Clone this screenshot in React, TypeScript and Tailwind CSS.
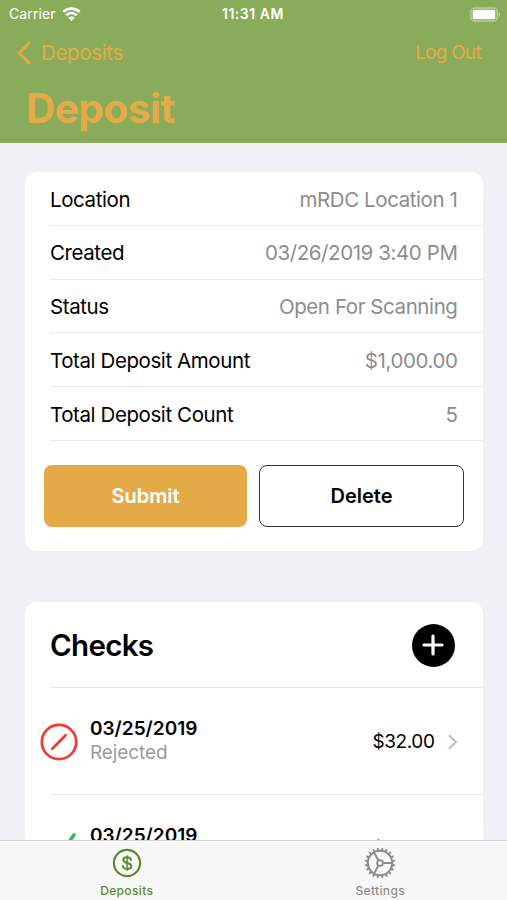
const details = [
  { label: 'Location', value: 'mRDC Location 1' },
  { label: 'Created', value: '03/26/2019 3:40 PM' },
  { label: 'Status', value: 'Open For Scanning' },
  { label: 'Total Deposit Amount', value: '$1,000.00' },
  { label: 'Total Deposit Count', value: '5' },
]

const checks = [
  { date: '03/25/2019', status: 'Rejected', amount: '$32.00' },
  { date: '03/25/2019', status: 'Accepted', amount: '$32.00' },
]

function WifiIcon() {
  return (
    <svg width="19" height="14" viewBox="0 0 18 14" fill="none" stroke="white" strokeWidth="2.7">
      <path d="M0.9 4.9a11.5 11.5 0 0 1 16.2 0" />
      <path d="M3.8 8.2a7.3 7.3 0 0 1 10.4 0" />
      <path d="M9 14 5.9 10.9a4.4 4.4 0 0 1 6.2 0Z" fill="white" stroke="none" />
    </svg>
  )
}

function BatteryIcon() {
  return (
    <svg width="31" height="15" viewBox="0 0 31 15" fill="none">
      <rect x="0.9" y="0.9" width="26.4" height="13.2" rx="3.8" stroke="white" strokeOpacity="0.4" strokeWidth="1.5" />
      <rect x="2.7" y="2.7" width="22.6" height="9.6" rx="2" fill="white" />
      <path d="M28.7 5.3c1.7 0.7 1.7 3.7 0 4.4Z" fill="white" fillOpacity="0.5" />
    </svg>
  )
}

function RejectedIcon() {
  return (
    <svg width="38" height="38" viewBox="0 0 38 38" fill="none" stroke="#f33b30" strokeWidth="2.7">
      <circle cx="19" cy="19" r="17.2" />
      <path d="M12.2 25.8 25.6 12.2" strokeLinecap="round" />
    </svg>
  )
}

function AcceptedIcon() {
  return (
    <svg width="38" height="38" viewBox="0 0 38 38" fill="none" stroke="#22bf55" strokeWidth="3.4">
      <path d="M6 22 14.5 33 34 4.8" strokeLinecap="round" strokeLinejoin="round" />
    </svg>
  )
}

function DollarIcon() {
  return (
    <svg width="30" height="30" viewBox="0 0 30 30" fill="none" stroke="#5b8c27" strokeLinecap="round">
      <circle cx="15" cy="15" r="13.1" strokeWidth="2.2" />
      <path
        d="M18.9 12c-.2-1.7-1.7-2.7-3.8-2.7-2.3 0-3.8 1.1-3.8 2.7 0 3.9 8 1.9 8 6 0 1.8-1.6 2.9-4.1 2.9s-4.1-1.1-4.3-2.9"
        strokeWidth="2"
      />
      <path d="M15.1 8v14.2" strokeWidth="1.5" />
    </svg>
  )
}

function GearIcon() {
  const teeth = Array.from({ length: 20 }, (_, i) => i * 18 + 9)
  return (
    <svg width="32" height="32" viewBox="-16 -16 32 32" fill="none" stroke="#8d8d8d">
      {teeth.map((angle) => (
        <path key={angle} d="M12-1.4 15.4-.7V.7L12 1.4Z" fill="#8d8d8d" stroke="none" transform={`rotate(${angle})`} />
      ))}
      <circle r="12.2" strokeWidth="2.1" />
      <circle r="2.9" strokeWidth="1.9" />
      <path d="M3 0H12M-1.5-2.6-6-10.4M-1.5 2.6-6 10.4" strokeWidth="2" />
    </svg>
  )
}

export default function App() {
  return (
    <div className="flex h-[900px] w-[507px] flex-col overflow-hidden bg-[#f1f0f6] font-['Inter',sans-serif] text-black">
      <header className="h-[143px] shrink-0 bg-[#89ac5a] text-[#e5aa48]">
        <div className="grid h-7 grid-cols-3 items-center pr-[6px] pl-[9px] text-[14px] leading-none text-white">
          <div className="flex items-center gap-[6px]">
            <span className="tracking-[0.1px]">Carrier</span>
            <WifiIcon />
          </div>
          <span className="-ml-1 text-center font-semibold tracking-[0.55px]">11:31 AM</span>
          <div className="flex justify-end">
            <BatteryIcon />
          </div>
        </div>
        <nav className="flex h-[49px] items-center justify-between pr-[26px] pl-4">
          <button className="flex items-center gap-[9px] text-[20.5px] tracking-[-0.35px]">
            <svg width="16" height="24" viewBox="0 0 16 24" fill="none" stroke="currentColor" strokeWidth="2.8">
              <path d="M14 1.3 3 12l11 10.7" />
            </svg>
            <span className="pt-[2px]">Deposits</span>
          </button>
          <button className="pt-[2px] text-[19px] tracking-[-0.75px]">Log Out</button>
        </nav>
        <h1 className="pl-[26px] text-[40.5px] leading-[64px] font-bold tracking-[-0.5px]">Deposit</h1>
      </header>

      <main className="flex min-h-0 flex-1 flex-col gap-[51px] overflow-hidden px-[25px] pt-[29px]">
        <section className="h-[379px] w-[457.5px] shrink-0 rounded-xl bg-white">
          <dl className="pl-[25px]">
            {details.map((d) => (
              <div
                key={d.label}
                className="flex h-[53.8px] items-center justify-between border-b border-[#e9e9eb] pt-[3px] pr-[25px] text-[20.5px] tracking-[-0.41px]"
              >
                <dt>{d.label}</dt>
                <dd className="text-[#8d8d8f]">{d.value}</dd>
              </div>
            ))}
          </dl>
          <div className="flex gap-3 pt-6 pr-[18.5px] pl-[19px] text-[20px] font-semibold">
            <button className="h-[62px] flex-1 rounded-lg bg-[#e5aa48] text-white">Submit</button>
            <button className="h-[62px] flex-1 rounded-lg border border-[#333333]">Delete</button>
          </div>
        </section>

        <section className="w-[457.5px] shrink-0 rounded-t-xl bg-white">
          <div className="ml-[25px] flex h-[86px] items-center justify-between border-b border-[#e5e5e7] pt-px pr-7">
            <h2 className="pt-px text-[29.5px] font-semibold tracking-[-0.7px]">Checks</h2>
            <button className="flex size-[43px] items-center justify-center rounded-full bg-black">
              <svg width="22" height="22" viewBox="0 0 22 22" stroke="white" strokeWidth="3.2" strokeLinecap="round">
                <path d="M11 2v18M2 11h18" />
              </svg>
            </button>
          </div>
          {checks.map((c, i) => (
            <div key={i} className="relative flex h-[107px] items-center pl-[15px]">
              {c.status === 'Rejected' ? <RejectedIcon /> : <AcceptedIcon />}
              <div className="flex-1 pb-[2px] pl-3 text-[19px] leading-6">
                <div className="font-semibold">{c.date}</div>
                <div className="tracking-[-0.1px] text-[#9a9a9c]">{c.status}</div>
              </div>
              <span className="pt-px text-[19px] tracking-[-0.4px]">{c.amount}</span>
              <svg className="mr-[25px] ml-3" width="11" height="16" viewBox="0 0 11 16" fill="none" stroke="#c4c4c7" strokeWidth="2.3">
                <path d="m2 1.3 6.8 6.7L2 14.7" />
              </svg>
              {/* inset divider, level with the heading */}
              <div className="absolute right-0 bottom-0 left-[25px] h-px bg-[#e9e9eb]" />
            </div>
          ))}
        </section>
      </main>

      <footer className="grid h-[60px] shrink-0 grid-cols-2 border-t border-[#d5d5d7] bg-[#f8f8f8] text-[12px] font-medium tracking-[0.35px]">
        <button className="flex flex-col items-center text-[#5b8c27]">
          <span className="flex h-[43px] items-center">
            <DollarIcon />
          </span>
          <span className="leading-[14px]">Deposits</span>
        </button>
        <button className="flex flex-col items-center text-[#8d8d8d]">
          <span className="flex h-[43px] items-center">
            <GearIcon />
          </span>
          <span className="leading-[14px]">Settings</span>
        </button>
      </footer>
    </div>
  )
}
